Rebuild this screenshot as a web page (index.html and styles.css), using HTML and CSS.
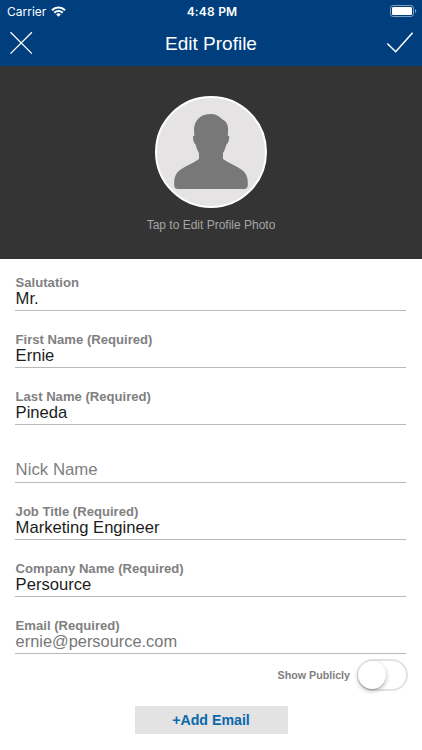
FILE: index.html
```
<!DOCTYPE html>
<html lang="en">
  <head>
    <meta charset="UTF-8" />
    <meta name="viewport" content="width=device-width, initial-scale=1.0" />
    <title>Edit Profile</title>
    <link rel="stylesheet" href="styles.css">
  </head>
  <body>
    <header>
      <div class="status">
        <div class="carrier">
          <span>Carrier</span>
          <svg width="15" height="11" viewBox="0 0 15 11" fill="none" stroke="#fff" stroke-width="2.2">
            <path d="M1 4.2a9.2 9.2 0 0 1 13 0" />
            <path d="M3.3 6.7a6 6 0 0 1 8.4 0" />
            <path d="M7.5 10.8L5.2 8.5a3.2 3.2 0 0 1 4.6 0z" fill="#fff" stroke="none" />
          </svg>
        </div>
        <span class="time">4:48 PM</span>
        <svg class="battery" width="27" height="12" viewBox="0 0 27 12">
          <rect x="0.5" y="0.5" width="23" height="11" rx="2.6" fill="none" stroke="#7d9fc0" />
          <rect x="2" y="2" width="20" height="8" rx="1.2" fill="#fff" />
          <path d="M25 4v4q1.3-.6 1.3-2T25 4z" fill="#7d9fc0" />
        </svg>
      </div>
      <nav>
        <button aria-label="Close">
          <svg width="24" height="24" viewBox="0 0 24 24" fill="none" stroke="#fff" stroke-width="1.3">
            <path d="M1.5 1.2l21.4 21.4M22.9 1.2L1.5 22.6" />
          </svg>
        </button>
        <h1>Edit Profile</h1>
        <button aria-label="Save">
          <svg width="28" height="24" viewBox="0 0 28 24" fill="none" stroke="#fff" stroke-width="1.6">
            <path d="M1.3 12.5l8.4 8.2L26.6 1.7" />
          </svg>
        </button>
      </nav>
    </header>

    <section class="photo">
      <div class="avatar">
        <svg width="108" height="108" viewBox="0 0 108 108" fill="#787878">
          <path d="M42 61V55C40 52 39.2 49 38.7 46.5C37.2 46 36 42 36 39.2C36 38 36.5 37.5 37.5 37.7C36.5 30 37 25 41.5 20.5C45 17 49 16 54 16C58.5 16 62.5 18 65.5 21.5C70.5 23.5 72 29 70.7 37.7C71.8 37.5 72.3 38 72.3 39.2C72 42 71 46 69.3 46.5C68.8 49 68 52 66 55V61C72 65.5 79 67.5 85 72C90 76 91 80 90.8 87Q90.8 91 87 91H21Q17.2 91 17.2 87C17 80 18 76 23 72C29 67.5 36 65.5 42 61Z" />
        </svg>
      </div>
      <p>Tap to Edit Profile Photo</p>
    </section>

    <main>
      <div class="field">
        <label>Salutation</label>
        <p>Mr.</p>
      </div>
      <div class="field">
        <label>First Name (Required)</label>
        <p>Ernie</p>
      </div>
      <div class="field">
        <label>Last Name (Required)</label>
        <p>Pineda</p>
      </div>
      <div class="field nick">
        <p>Nick Name</p>
      </div>
      <div class="field">
        <label>Job Title (Required)</label>
        <p>Marketing Engineer</p>
      </div>
      <div class="field">
        <label>Company Name (Required)</label>
        <p>Persource</p>
      </div>
      <div class="field">
        <label>Email (Required)</label>
        <p class="email">ernie@persource.com</p>
      </div>
      <div class="public">
        <span>Show Publicly</span>
        <div class="switch"><div class="knob"></div></div>
      </div>
      <button class="add">+Add Email</button>
    </main>
  </body>
</html>
```
FILE: styles.css
```
* {
  box-sizing: border-box;
}
body {
  margin: 0;
  height: 750px;
  overflow: hidden;
  background-color: #fff;
  font-family: "Liberation Sans", Arial, sans-serif;
}
h1, p {
  margin: 0;
  font-weight: normal;
}
button {
  border: none;
  padding: 0;
  background: none;
  font-family: inherit;
}
svg {
  display: block;
}

header {
  height: 66px;
  background-color: #003e7e;
  color: #fff;
}
.status {
  display: grid;
  grid-template-columns: 1fr auto 1fr;
  align-items: center;
  height: 22px;
  padding: 0 5px 0 7px;
  font-family: Inter, sans-serif;
  font-size: 12px;
}
.carrier {
  display: flex;
  align-items: center;
  gap: 5px;
}
.time {
  font-weight: 600;
  letter-spacing: 0.2px;
}
.battery {
  justify-self: end;
}
nav {
  display: flex;
  justify-content: space-between;
  align-items: center;
  height: 42px;
  padding: 0 8px 0 9px;
}
h1 {
  padding: 2px 0 0 3px;
  font-size: 19px;
}

.photo {
  display: flex;
  flex-direction: column;
  align-items: center;
  height: 193px;
  padding-top: 30px;
  background-color: #343434;
}
.avatar {
  width: 112px;
  height: 112px;
  border: 2px solid #fff;
  border-radius: 50%;
  background-color: #e5e3e4;
  overflow: hidden;
}
.photo p {
  margin-top: 10px;
  color: #a5a5a5;
  font-size: 12px;
  line-height: 14px;
}

main {
  display: flex;
  flex-direction: column;
  padding: 0 15px;
}
.field {
  display: flex;
  flex-direction: column;
  justify-content: flex-end;
  height: 57px;
  margin-right: 1px;
  padding: 0 0 3px 0.6px;
  border-bottom: 1px solid #b9b9b9;
}
.field:first-child {
  height: 52px;
}
.field label {
  color: #808080;
  font-size: 13.1px;
  font-weight: bold;
  line-height: 14px;
}
.field p {
  color: #1c1c1c;
  font-size: 16.6px;
  line-height: 17px;
}
.field.nick {
  height: 58px;
  padding-bottom: 4px;
}
.field.nick p {
  color: #808080;
  font-size: 16.8px;
}
.field .email {
  color: #777;
  font-size: 16.4px;
}

.public {
  display: flex;
  justify-content: flex-end;
  align-items: center;
  gap: 7px;
  height: 42px;
  margin-right: -1px;
  color: #808080;
  font-size: 10.7px;
  font-weight: bold;
}
.switch {
  width: 51px;
  height: 32px;
  border: 2px solid #e3e3e3;
  border-radius: 16px;
}
.knob {
  width: 28px;
  height: 28px;
  margin-left: -1px;
  border-radius: 50%;
  background-color: #fff;
  box-shadow: 0 2px 5px rgba(0, 0, 0, 0.25), 0 1px 1px rgba(0, 0, 0, 0.18);
}
.add {
  align-self: center;
  width: 153px;
  height: 28px;
  margin-top: 10px;
  background-color: #e3e3e3;
  color: #0a68ac;
  font-size: 14.2px;
  font-weight: bold;
}
```
